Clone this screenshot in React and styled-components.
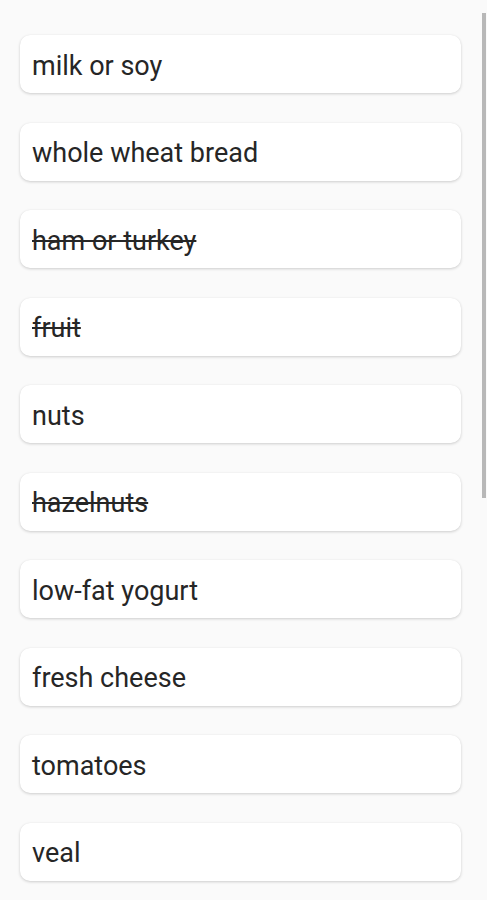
import styled, { createGlobalStyle } from "styled-components";

const GlobalStyle = createGlobalStyle`
  html, body {
    margin: 0;
    padding: 0;
    background: #fafafa;
    font-family: Roboto, "Noto Sans", sans-serif;
  }
`;

const items = [
  { name: "milk or soy", done: false },
  { name: "whole wheat bread", done: false },
  { name: "ham or turkey", done: true },
  { name: "fruit", done: true },
  { name: "nuts", done: false },
  { name: "hazelnuts", done: true },
  { name: "low-fat yogurt", done: false },
  { name: "fresh cheese", done: false },
  { name: "tomatoes", done: false },
  { name: "veal", done: false },
];

const Screen = () => (
  <>
    <GlobalStyle />
    <Page>
      <List>
        {items.map((item) => (
          <Card key={item.name}>
            <Label done={item.done}>{item.name}</Label>
          </Card>
        ))}
      </List>
      <ScrollThumb />
    </Page>
  </>
);

export default Screen;

const Page = styled.div`
  position: relative;
  width: 487px;
  height: 900px;
  overflow: hidden;
  background: #fafafa;
`;

const List = styled.ul`
  list-style: none;
  margin: 0;
  padding: 35px 26px 0 20px;
  display: flex;
  flex-direction: column;
  gap: 29.5px;
`;

const Card = styled.li`
  display: flex;
  align-items: center;
  height: 58px;
  padding: 3px 12px 0;
  box-sizing: border-box;
  background: #fff;
  border-radius: 10px;
  box-shadow: 0 1px 3px rgba(0, 0, 0, 0.18), 0 0 1px rgba(0, 0, 0, 0.06);
`;

const Label = styled.span`
  font-size: 27px;
  line-height: 32px;
  color: #262626;
  text-decoration: ${(p) => (p.done ? "line-through" : "none")};
`;

const ScrollThumb = styled.div`
  position: absolute;
  top: 13px;
  right: 1px;
  width: 4px;
  height: 485px;
  background: #b8b8b8;
`;
